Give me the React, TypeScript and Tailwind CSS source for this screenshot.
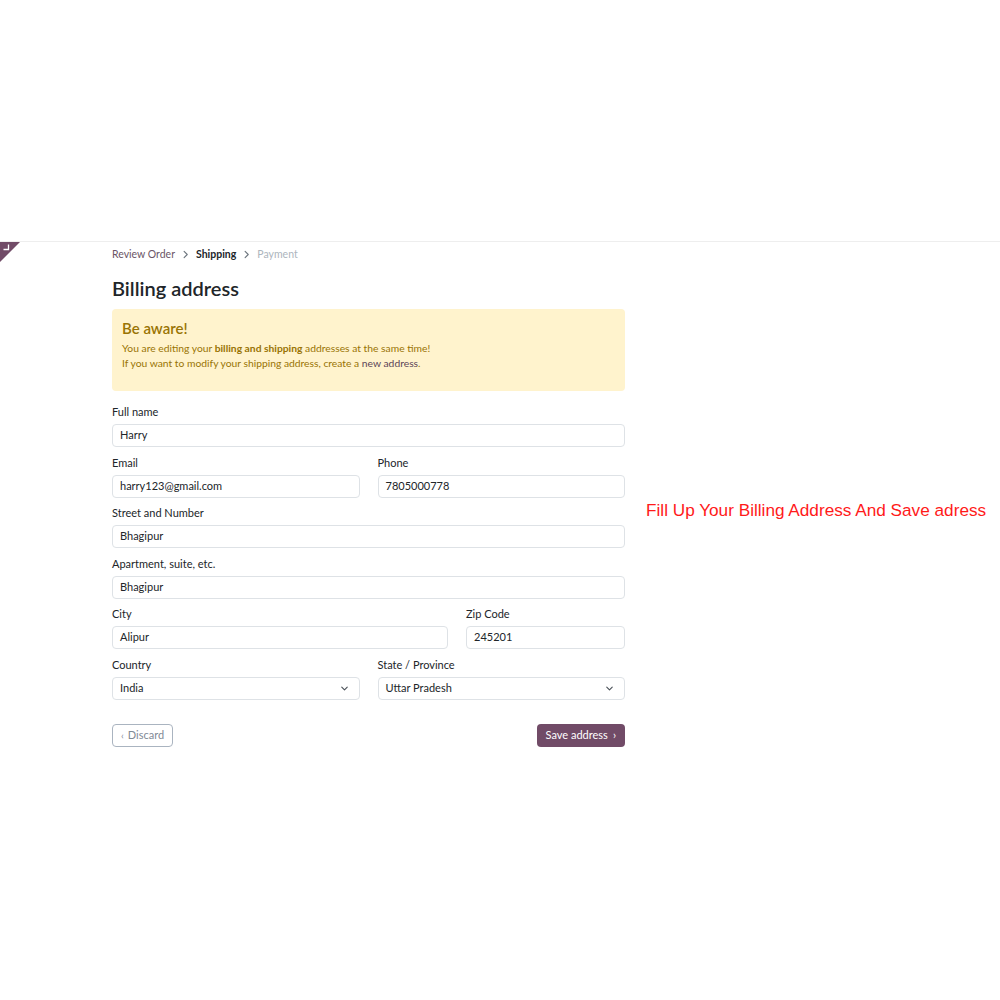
import React from "react";

const font = { fontFamily: "Lato, 'Noto Sans', sans-serif" };

function Chevron({ className = "" }: { className?: string }) {
  return (
    <svg viewBox="0 0 16 16" className={className} fill="none" stroke="currentColor" strokeWidth="1.6" strokeLinecap="round" strokeLinejoin="round">
      <path d="M6 3.5 10.5 8 6 12.5" />
    </svg>
  );
}

function Down({ className = "" }: { className?: string }) {
  return (
    <svg viewBox="0 0 16 16" className={className} fill="none" stroke="currentColor" strokeWidth="1.6" strokeLinecap="round" strokeLinejoin="round">
      <path d="M4 6 8 10 12 6" />
    </svg>
  );
}

function Field({ label, value, select }: { label: string; value: string; select?: boolean }) {
  return (
    <div className="flex flex-col min-w-0">
      <label className="text-[11px] leading-[15px] h-[15px] text-[#212529] mb-[5px]">{label}</label>
      <div className="h-[23px] border border-[#dee2e6] rounded-[4px] flex items-center px-[7px] text-[11px] text-[#212529] bg-white">
        <span className="flex-1">{value}</span>
        {select && <Down className="w-[11px] h-[11px] text-[#495057] mr-[2px]" />}
      </div>
    </div>
  );
}

export default function App() {
  return (
    <div className="w-[1000px] h-[1000px] bg-white relative overflow-hidden" style={font}>
      <div className="h-[241px]" />
      <div className="border-t border-[#eeeeee] relative">
        <div className="absolute left-0 top-0 w-0 h-0 border-t-[20px] border-r-[20px] border-t-[#714b67] border-r-transparent" />
        <svg className="absolute left-[3px] top-[2px] w-[7px] h-[7px]" viewBox="0 0 7 7" fill="none" stroke="white" strokeWidth="1.3">
          <path d="M5.5 0.5V5.5H0.5" />
        </svg>
        <div className="flex">
          <div className="ml-[112px] w-[513px] flex flex-col">
            <div className="flex items-center h-[15px] mt-[5px] text-[10.5px] leading-[15px]">
              <span className="text-[#6b5566]">Review Order</span>
              <Chevron className="w-[11px] h-[11px] text-[#6c757d] mx-[5px]" />
              <span className="font-bold text-[#212529]">Shipping</span>
              <Chevron className="w-[11px] h-[11px] text-[#6c757d] mx-[5px]" />
              <span className="text-[#adb5bd]">Payment</span>
            </div>
            <h1 className="text-[20px] leading-[26px] font-semibold text-[#212529] mt-[13px]">Billing address</h1>
            <div className="mt-[8px] h-[82px] bg-[#fff3cd] rounded-[4px] px-[10px] pt-[10px]">
              <div className="text-[15px] leading-[18px] font-semibold text-[#997404]">Be aware!</div>
              <div className="mt-[4px] text-[10.3px] leading-[15px] text-[#997404]">
                You are editing your <b>billing and shipping</b> addresses at the same time!
              </div>
              <div className="text-[10.3px] leading-[15px] text-[#997404]">
                If you want to modify your shipping address, create a <span className="text-[#5c4457]">new address</span>.
              </div>
            </div>
            <div className="mt-[13px] flex flex-col gap-y-[7.5px]">
              <Field label="Full name" value="Harry" />
              <div className="grid grid-cols-2 gap-x-[18px]">
                <Field label="Email" value="harry123@gmail.com" />
                <Field label="Phone" value="7805000778" />
              </div>
              <Field label="Street and Number" value="Bhagipur" />
              <Field label="Apartment, suite, etc." value="Bhagipur" />
              <div className="grid grid-cols-[336px_1fr] gap-x-[18px]">
                <Field label="City" value="Alipur" />
                <Field label="Zip Code" value="245201" />
              </div>
              <div className="grid grid-cols-2 gap-x-[18px]">
                <Field label="Country" value="India" select />
                <Field label="State / Province" value="Uttar Pradesh" select />
              </div>
            </div>
            <div className="mt-[24px] flex justify-between">
              <button className="h-[23px] px-[8px] border border-[#aab4c0] rounded-[4px] text-[11px] text-[#7f8a96] flex items-center gap-[4px]">
                <span className="text-[10px]">‹</span> Discard
              </button>
              <button className="h-[23px] px-[9px] bg-[#714b67] rounded-[4px] text-[11px] text-white flex items-center gap-[5px]">
                Save address <span className="text-[11px]">›</span>
              </button>
            </div>
          </div>
          <div className="ml-[21px] mt-[257px] text-[17.2px] leading-[22px] text-[#ff1a1a] whitespace-nowrap" style={{ fontFamily: "'Liberation Sans', Arial, sans-serif" }}>
            Fill Up Your Billing Address And Save adress
          </div>
        </div>
      </div>
    </div>
  );
}
